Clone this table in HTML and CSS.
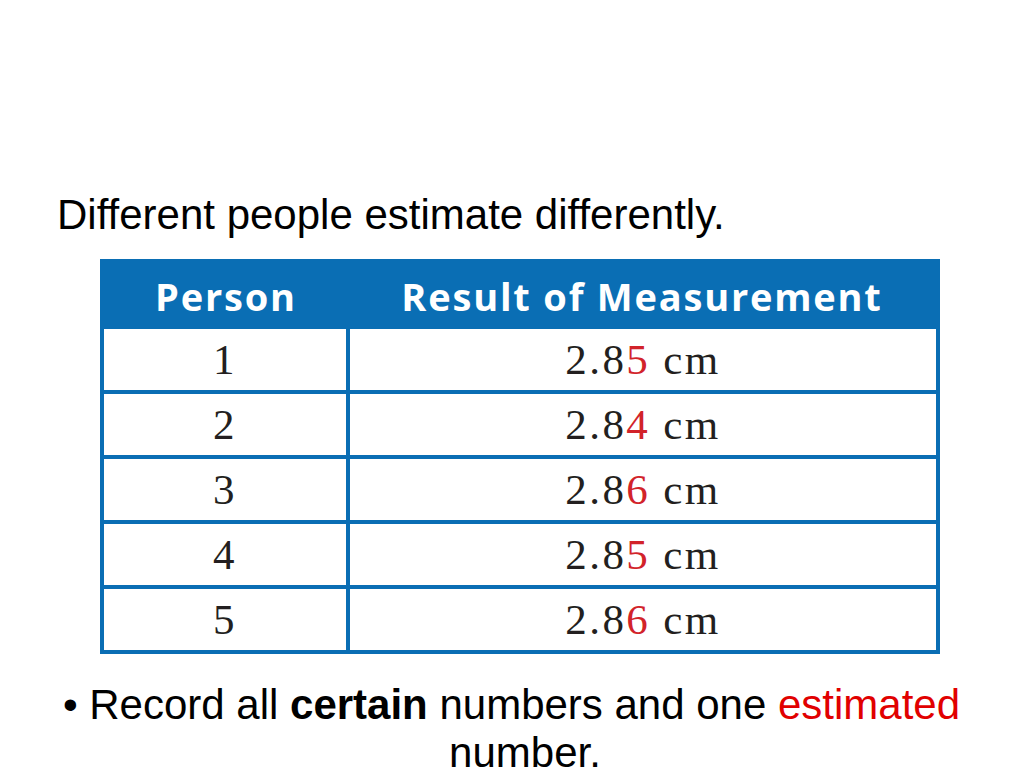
FILE: index.html
```html
<!DOCTYPE html>
<html>
<head>
<meta charset="utf-8">
<link rel="stylesheet" href="styles.css">
</head>
<body>
<div class="slide">
  <p class="title">Different people estimate differently.</p>
  <table class="data">
    <thead>
      <tr><th class="c1">Person</th><th class="c2">Result of Measurement</th></tr>
    </thead>
    <tbody>
      <tr><td class="c1">1</td><td class="c2">2.8<span class="est">5</span> cm</td></tr>
      <tr><td class="c1">2</td><td class="c2">2.8<span class="est">4</span> cm</td></tr>
      <tr><td class="c1">3</td><td class="c2">2.8<span class="est">6</span> cm</td></tr>
      <tr><td class="c1">4</td><td class="c2">2.8<span class="est">5</span> cm</td></tr>
      <tr><td class="c1">5</td><td class="c2">2.8<span class="est">6</span> cm</td></tr>
    </tbody>
  </table>
  <p class="note">• Record all <b>certain</b> numbers and one <span class="red">estimated</span> number.</p>
</div>
</body>
</html>
```
FILE: styles.css
```css
html, body {
  margin: 0;
  padding: 0;
  background: #ffffff;
}
.slide {
  width: 1024px;
  height: 768px;
  overflow: hidden;
  padding-top: 191px;
  box-sizing: border-box;
  font-family: "Liberation Sans", Arial, sans-serif;
  color: #000;
}
.title {
  margin: 0 0 0 57px;
  font-size: 42px;
  line-height: 48px;
}
.data {
  margin: 20px 0 0 100px;
  width: 840px;
  border-collapse: collapse;
  border: 4px solid #0a6eb4;
  table-layout: fixed;
}
.data th {
  background: #0a6eb4;
  color: #fff;
  font-family: "Open Sans", sans-serif;
  font-weight: 700;
  font-size: 38px;
  letter-spacing: 1.8px;
  height: 66px;
  padding: 0;
  text-align: center;
}
.data th.c1 { width: 244px; }
.data td {
  font-family: "Liberation Serif", "Times New Roman", serif;
  font-size: 43px;
  letter-spacing: 2.4px;
  height: 61px;
  padding: 0;
  text-align: center;
  color: #231f20;
  border-top: 4px solid #0a6eb4;
}
.data td.c1 {
  border-right: 4px solid #0a6eb4;
}
.data tbody tr:first-child td { border-top: none; }
.est { color: #d2232a; }
.note {
  margin: 27px 0 0 75px;
  width: 900px;
  text-indent: -27px;
  text-align: center;
  font-size: 42px;
  line-height: 48px;
}
.note b { font-weight: 700; }
.red { color: #e10000; }
```
